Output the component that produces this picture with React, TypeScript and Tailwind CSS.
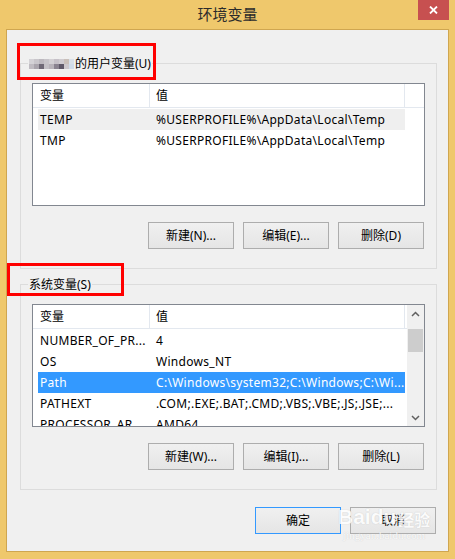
const blur = [
  ['#d4d2d6', '#c9c6cb', '#bdb9bf', '#c7c4c9', '#d3d0d4', '#c6c1c8', '#cfcbd0', '#c9bfb9', '#d7e0ea'],
  ['#bfbbc1', '#a9a4ac', '#6f6976', '#c4c1c6', '#b8b3ba', '#8a8390', '#5f5868', '#cdc8cc', '#cfdceb'],
]

function BlurredName() {
  return (
    <svg width="45" height="10" viewBox="0 0 45 10" className="mr-px shrink-0">
      {blur.map((row, r) =>
        row.map((c, i) => <rect key={`${r}-${i}`} x={i * 5} y={r * 5} width="5" height="5" fill={c} />),
      )}
    </svg>
  )
}

function Chevron({ up }: { up?: boolean }) {
  return (
    <svg width="9" height="6" viewBox="0 0 9 6">
      <path d={up ? 'M1 5 L4.5 1.5 L8 5' : 'M1 1 L4.5 4.5 L8 1'} fill="none" stroke="#606060" strokeWidth="1.5" />
    </svg>
  )
}

type Row = { name: string; value: string; hover?: boolean; selected?: boolean }

function ListHeader() {
  return (
    <div className="flex h-[24px] shrink-0 border-b border-[#e3e8ef] text-black">
      <div className="flex w-[117px] items-center border-r border-[#e3e8ef] pl-[7px]">变量</div>
      <div className="flex w-[255px] items-center border-r border-[#e3e8ef] pl-[6px]">值</div>
    </div>
  )
}

function ListRows({ rows }: { rows: Row[] }) {
  return (
    <div className="flex flex-col pt-px tracking-[0.3px]">
      {rows.map((r) => (
        <div
          key={r.name}
          className={`ml-[5px] flex h-[21px] w-[367px] shrink-0 items-center whitespace-nowrap ${
            r.selected ? 'bg-[#3399ff] text-white' : r.hover ? 'bg-[#efefef] text-black' : 'text-black'
          }`}
        >
          <div className="w-[111px] overflow-hidden pl-[2px]">{r.name}</div>
          <div className="flex-1 overflow-hidden pl-[7px]">{r.value}</div>
        </div>
      ))}
    </div>
  )
}

function Button({ children, primary }: { children: React.ReactNode; primary?: boolean }) {
  return (
    <button
      className={`flex h-[27px] w-[86px] items-center justify-center border bg-gradient-to-b from-[#f0f0f0] to-[#e5e5e5] text-[12px] text-black ${
        primary ? 'border-[#3399ff]' : 'border-[#adadad]'
      }`}
    >
      {children}
    </button>
  )
}

export default function App() {
  const userRows: Row[] = [
    { name: 'TEMP', value: '%USERPROFILE%\\AppData\\Local\\Temp', hover: true },
    { name: 'TMP', value: '%USERPROFILE%\\AppData\\Local\\Temp' },
  ]
  const sysRows: Row[] = [
    { name: 'NUMBER_OF_PR...', value: '4' },
    { name: 'OS', value: 'Windows_NT' },
    { name: 'Path', value: 'C:\\Windows\\system32;C:\\Windows;C:\\Wi...', selected: true },
    { name: 'PATHEXT', value: '.COM;.EXE;.BAT;.CMD;.VBS;.VBE;.JS;.JSE;...' },
    { name: 'PROCESSOR_AR...', value: 'AMD64' },
  ]

  return (
    <div className="relative flex h-[559px] w-[455px] flex-col overflow-hidden bg-[#efc86c] px-[6px] pb-[7px] font-['Noto_Sans','Noto_Sans_CJK_SC',sans-serif] text-[12px]">
      {/* title bar */}
      <div className="flex h-[29px] shrink-0 justify-between">
        <div className="w-[31px]" />
        <div className="pt-[4px] text-[15px] leading-[20px] text-[#2b2b2b]">环境变量</div>
        <div className="flex h-[20px] w-[31px] items-center justify-center bg-[#c75050]">
          <svg width="9" height="8" viewBox="0 0 9 8">
            <path d="M1 0.5 L8 7.5 M8 0.5 L1 7.5" stroke="white" strokeWidth="1.8" />
          </svg>
        </div>
      </div>

      {/* dialog body */}
      <div className="flex flex-col border border-[#cfa650] bg-[#f0f0f0] pt-[33px] pr-[11px] pb-[17px] pl-[13px]">
        <div className="flex flex-col border border-[#dcdcdc]">
          <div className="-mt-[9px] ml-[7px] flex h-[17px] w-fit items-center bg-[#f0f0f0] px-px text-black">
            <BlurredName />
            的用户变量(U)
          </div>
          <div className="mx-[11px] mt-[11px] flex h-[123px] flex-col overflow-hidden border border-[#828790] bg-white">
            <ListHeader />
            <ListRows rows={userRows} />
          </div>
          <div className="mt-[16px] mr-[12px] flex justify-end gap-[9px] pb-[19px]">
            <Button>新建(N)...</Button>
            <Button>编辑(E)...</Button>
            <Button>删除(D)</Button>
          </div>
        </div>

        <div className="mt-[15px] flex flex-col border border-[#dcdcdc]">
          <div className="-mt-[9px] ml-[7px] flex h-[17px] w-fit items-center bg-[#f0f0f0] px-px text-black">
            系统变量(S)
          </div>
          <div className="mx-[11px] mt-[11px] flex h-[123px] overflow-hidden border border-[#828790] bg-white">
            <div className="flex flex-1 flex-col overflow-hidden">
              <ListHeader />
              <ListRows rows={sysRows} />
            </div>
            <div className="flex w-[17px] shrink-0 flex-col items-center bg-[#f0f0f0]">
              <div className="flex h-[17px] items-center justify-center">
                <Chevron up />
              </div>
              <div className="mt-[7px] h-[23px] w-[15px] bg-[#cdcdcd]" />
              <div className="flex-1" />
              <div className="flex h-[17px] items-center justify-center">
                <Chevron />
              </div>
            </div>
          </div>
          <div className="mt-[16px] mr-[12px] flex justify-end gap-[9px] pb-[19px]">
            <Button>新建(W)...</Button>
            <Button>编辑(I)...</Button>
            <Button>删除(L)</Button>
          </div>
        </div>

        <div className="mt-[17px] flex justify-end gap-[9px] pr-px">
          <Button primary>确定</Button>
          <Button>取消</Button>
        </div>
      </div>

      {/* annotation boxes */}
      <div className="absolute top-[43px] left-[17px] h-[37px] w-[139px] border-[3px] border-[#ff0000]" />
      <div className="absolute top-[263px] left-[7px] h-[33px] w-[117px] border-[3px] border-[#ff0000]" />

      {/* watermark */}
      <div className="pointer-events-none absolute top-[506px] left-[338px] flex flex-col items-center leading-none text-white opacity-80 [text-shadow:0_0_1px_#b8b8b8]">
        <div className="flex items-end font-['Liberation_Sans',sans-serif] text-[21px] font-bold">
          Bai<span>du</span>
          <span className="ml-[2px] font-['Noto_Sans_CJK_SC',sans-serif] text-[16px] font-bold">经验</span>
        </div>
        <div className="mt-[3px] font-['Liberation_Serif',serif] text-[11px]">jingyan.baidu.com</div>
      </div>
    </div>
  )
}
